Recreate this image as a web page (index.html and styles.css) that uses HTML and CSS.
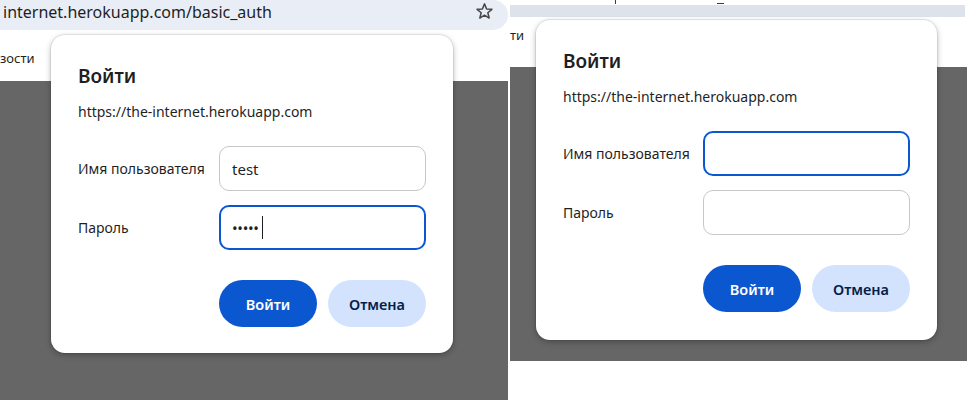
FILE: index.html
```html
<!DOCTYPE html>
<html lang="ru">
<head>
<meta charset="utf-8">
<title>basic_auth</title>
<link rel="stylesheet" href="styles.css">
</head>
<body>
  <div class="panel panel-left">
    <div class="omnibox">
      <span class="omni-url">internet.herokuapp.com/basic_auth</span>
      <svg class="star" viewBox="0 0 20 20" aria-hidden="true"><polygon points="10,2 12.2,7.3 17.8,7.7 13.5,11.3 14.9,16.9 10,13.9 5.1,16.9 6.5,11.3 2.2,7.7 7.8,7.3" fill="none" stroke="#474747" stroke-width="1.6" stroke-linejoin="round"/></svg>
    </div>
    <div class="page-strip"><span class="bm bm-left">зости</span></div>
    <div class="overlay overlay-left"></div>
    <div class="dialog dialog-left">
      <div class="title">Войти</div>
      <div class="origin">https://the-internet.herokuapp.com</div>
      <div class="form">
        <div class="row">
          <span class="label">Имя пользователя</span>
          <div class="input"><span class="value">test</span></div>
        </div>
        <div class="row">
          <span class="label">Пароль</span>
          <div class="input focused"><span class="dots">•••••</span><span class="caret"></span></div>
        </div>
      </div>
      <div class="actions">
        <button class="btn primary">Войти</button>
        <button class="btn secondary">Отмена</button>
      </div>
    </div>
  </div>
  <div class="panel panel-right">
    <div class="clip-top"><span class="frag frag-p"></span><span class="frag frag-u"></span></div>
    <div class="bar-right"></div>
    <div class="page-strip page-strip-right"><span class="bm bm-right">ти</span></div>
    <div class="overlay overlay-right"></div>
    <div class="dialog dialog-right">
      <div class="title">Войти</div>
      <div class="origin">https://the-internet.herokuapp.com</div>
      <div class="form">
        <div class="row">
          <span class="label">Имя пользователя</span>
          <div class="input focused"></div>
        </div>
        <div class="row">
          <span class="label">Пароль</span>
          <div class="input"></div>
        </div>
      </div>
      <div class="actions">
        <button class="btn primary">Войти</button>
        <button class="btn secondary">Отмена</button>
      </div>
    </div>
  </div>
</body>
</html>
```
FILE: styles.css
```css
html, body {
  margin: 0;
  padding: 0;
}
body {
  width: 967px;
  height: 400px;
  overflow: hidden;
  background: #ffffff;
  display: flex;
  gap: 2px;
  font-family: "Noto Sans", "Open Sans", sans-serif;
  color: #1f1f1f;
}
.panel {
  position: relative;
  display: flex;
  flex-direction: column;
  height: 400px;
}
.panel-left {
  width: 508px;
}
.panel-right {
  width: 457px;
}
.omnibox {
  height: 30px;
  background: #e9eef6;
  border-radius: 0 15px 15px 0;
  display: flex;
  align-items: center;
  justify-content: space-between;
  padding: 0 14px 0 3px;
  flex-shrink: 0;
}
.omni-url {
  font-size: 16px;
  line-height: 22px;
  margin-top: -6px;
  color: #1f1f1f;
  white-space: nowrap;
}
.star {
  width: 19px;
  height: 19px;
  margin-top: -7px;
}
.page-strip {
  height: 51px;
  display: flex;
  align-items: center;
  flex-shrink: 0;
}
.bm {
  font-size: 13px;
  color: #1f1f1f;
  white-space: nowrap;
}
.bm-left {
  margin-top: 4px;
}
.overlay {
  background: #666666;
  flex-shrink: 0;
}
.overlay-left {
  height: 319px;
}
.clip-top {
  height: 5px;
  display: flex;
  align-items: flex-start;
  flex-shrink: 0;
}
.frag {
  display: block;
  background: #3c3c3c;
}
.frag-p {
  width: 1px;
  height: 4px;
  margin-left: 105px;
}
.frag-u {
  width: 7px;
  height: 1px;
  margin-left: 101px;
  margin-top: 3px;
}
.bar-right {
  height: 12px;
  width: 455px;
  background: #dee3eb;
  flex-shrink: 0;
}
.page-strip-right {
  height: 50px;
}
.bm-right {
  margin-top: -14px;
}
.overlay-right {
  height: 294px;
}

/* dialog */
.dialog {
  position: absolute;
  box-sizing: border-box;
  width: 402px;
  height: 318px;
  background: #ffffff;
  border-radius: 14px;
  box-shadow: 0 0 0 1px rgba(0, 0, 0, 0.07), 0 2px 6px rgba(0, 0, 0, 0.28);
  padding: 0 27px;
  display: flex;
  flex-direction: column;
}
.dialog-left {
  left: 51px;
  top: 35px;
}
.dialog-right {
  left: 26px;
  top: 20px;
  width: 401px;
  height: 320px;
}
.title {
  margin-top: 28px;
  font-size: 19px;
  line-height: 26px;
  font-weight: 600;
  color: #1f1f1f;
}
.origin {
  margin-top: 13px;
  font-size: 14px;
  line-height: 20px;
  color: #1f1f1f;
}
.form {
  margin-top: 24px;
  display: flex;
  flex-direction: column;
  gap: 14px;
}
.row {
  display: flex;
  align-items: center;
  justify-content: space-between;
}
.label {
  font-size: 14px;
  color: #1f1f1f;
}
.input {
  box-sizing: border-box;
  width: 207px;
  height: 45px;
  border: 1px solid #c7c7c7;
  border-radius: 10px;
  display: flex;
  align-items: center;
  padding-left: 12px;
}
.input.focused {
  border: 2px solid #0b57d0;
  padding-left: 11px;
}
.value {
  font-size: 15px;
  color: #1f1f1f;
}
.dots {
  font-size: 15px;
  letter-spacing: -0.3px;
  color: #1f1f1f;
}
.caret {
  width: 1px;
  height: 23px;
  background: #1f1f1f;
  margin-left: 3px;
}
.actions {
  margin-top: 30px;
  display: flex;
  justify-content: flex-end;
  gap: 11px;
}
.btn {
  box-sizing: border-box;
  width: 98px;
  height: 47px;
  border: none;
  border-radius: 24px;
  font-family: "Noto Sans", "Open Sans", sans-serif;
  font-size: 14.5px;
  font-weight: 600;
  padding: 0;
}
.btn.primary {
  background: #0b57d0;
  color: #ffffff;
}
.btn.secondary {
  background: #d3e3fd;
  color: #041e49;
}
```
